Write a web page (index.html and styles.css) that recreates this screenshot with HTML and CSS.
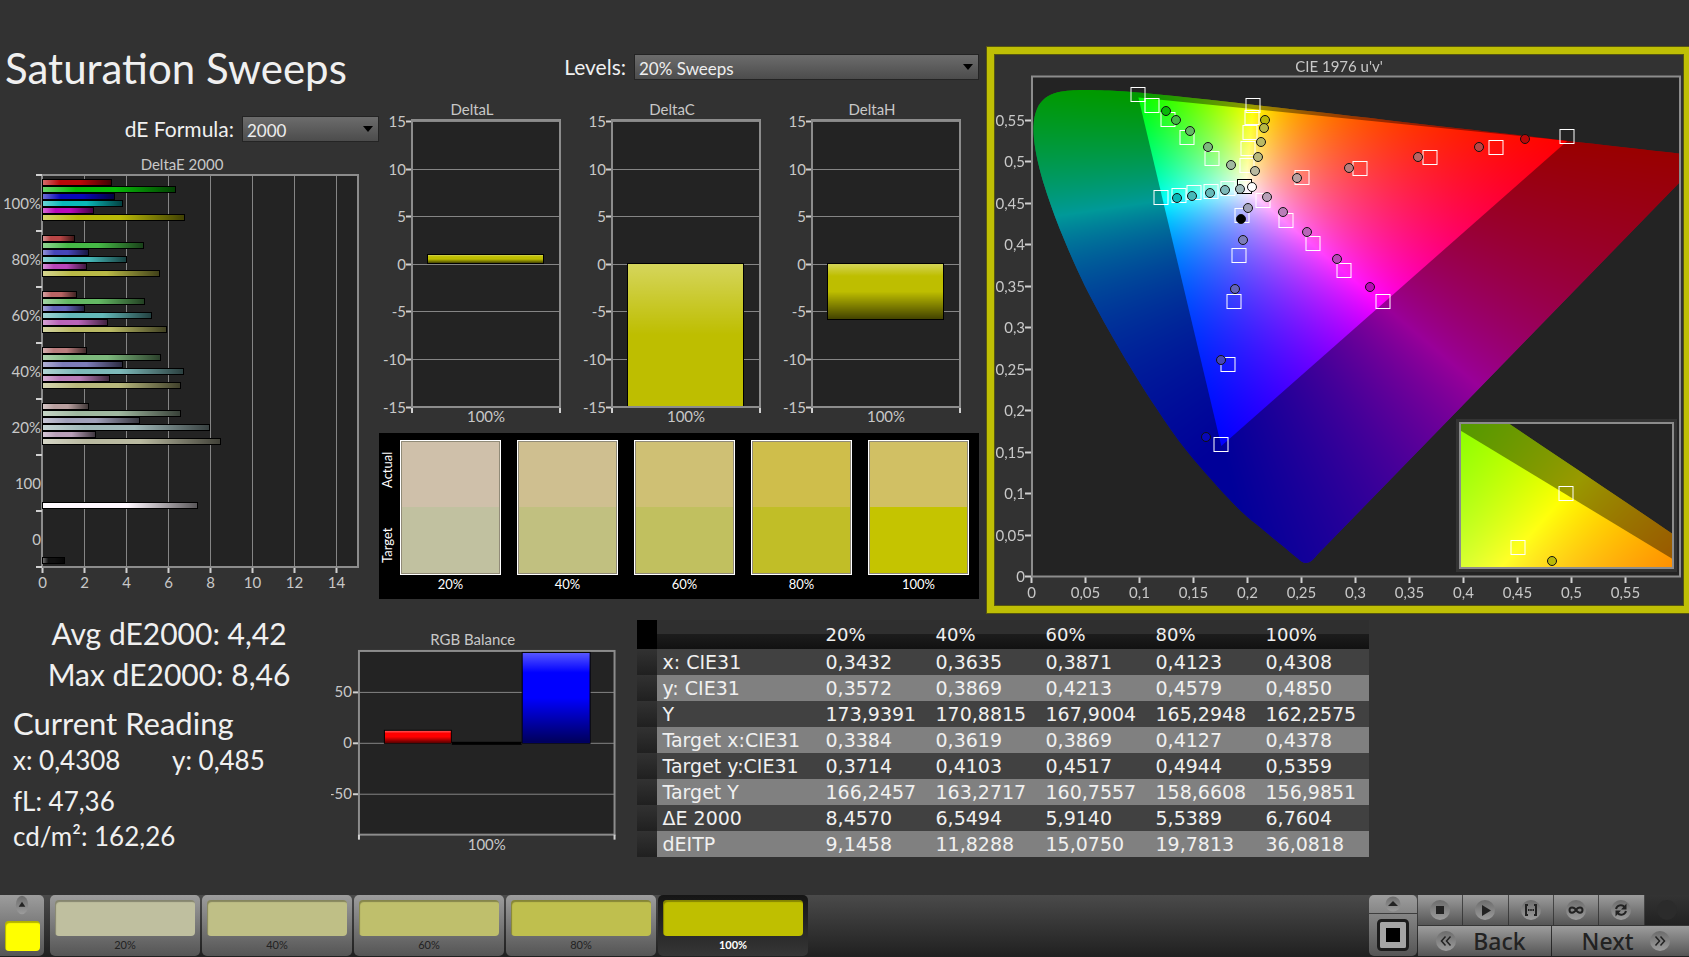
FILE: index.html
```html
<!DOCTYPE html>
<html lang="en">
<head>
<meta charset="UTF-8">
<meta name="viewport" content="width=device-width, initial-scale=1.0">
<title>Saturation Sweeps</title>
<link rel="stylesheet" href="styles.css">
</head>
<body>
    <main>
        <div class="top">
            <section class="left">
                <h1>Saturation Sweeps</h1>
                <div class="field formula">
                    <label for="formula">dE Formula:</label>
                    <div class="select"><select id="formula"><option>2000</option></select></div>
                </div>
                <svg id="deltaE" class="chart" viewBox="0 0 379 440"></svg>
            </section>
            <section class="middle">
                <div class="field levels">
                    <label for="levels">Levels:</label>
                    <div class="select"><select id="levels"><option>20% Sweeps</option></select></div>
                </div>
                <div class="deltas">
                    <svg id="deltaL" class="chart" viewBox="0 0 200 330"></svg>
                    <svg id="deltaC" class="chart" viewBox="0 0 200 330"></svg>
                    <svg id="deltaH" class="chart" viewBox="0 0 200 330"></svg>
                </div>
                <div class="swatches">
                    <div class="swatch-names"><span>Actual</span><span>Target</span></div>
                    <figure><div class="swatch s20"></div><figcaption>20%</figcaption></figure>
                    <figure><div class="swatch s40"></div><figcaption>40%</figcaption></figure>
                    <figure><div class="swatch s60"></div><figcaption>60%</figcaption></figure>
                    <figure><div class="swatch s80"></div><figcaption>80%</figcaption></figure>
                    <figure><div class="swatch s100"></div><figcaption>100%</figcaption></figure>
                </div>
            </section>
            <section class="cie">
                <canvas id="gamut" width="690" height="552"></canvas>
                <svg id="cie" class="chart" viewBox="0 0 690 552"></svg>
            </section>
        </div>
        <div class="bottom">
            <section class="stats">
                <div class="totals">
                    <p>Avg dE2000: 4,42</p>
                    <p>Max dE2000: 8,46</p>
                </div>
                <h2>Current Reading</h2>
                <div class="xy"><span>x: 0,4308</span><span>y: 0,485</span></div>
                <p>fL: 47,36</p>
                <p>cd/m²: 162,26</p>
            </section>
            <svg id="rgb" class="chart" viewBox="0 0 300 250"></svg>
            <table>
                <thead>
                    <tr><td class="handle"></td><th></th><th>20%</th><th>40%</th><th>60%</th><th>80%</th><th>100%</th></tr>
                </thead>
                <tbody>
                    <tr><td class="handle"></td><th>x: CIE31</th><td>0,3432</td><td>0,3635</td><td>0,3871</td><td>0,4123</td><td>0,4308</td></tr>
                    <tr><td class="handle"></td><th>y: CIE31</th><td>0,3572</td><td>0,3869</td><td>0,4213</td><td>0,4579</td><td>0,4850</td></tr>
                    <tr><td class="handle"></td><th>Y</th><td>173,9391</td><td>170,8815</td><td>167,9004</td><td>165,2948</td><td>162,2575</td></tr>
                    <tr><td class="handle"></td><th>Target x:CIE31</th><td>0,3384</td><td>0,3619</td><td>0,3869</td><td>0,4127</td><td>0,4378</td></tr>
                    <tr><td class="handle"></td><th>Target y:CIE31</th><td>0,3714</td><td>0,4103</td><td>0,4517</td><td>0,4944</td><td>0,5359</td></tr>
                    <tr><td class="handle"></td><th>Target Y</th><td>166,2457</td><td>163,2717</td><td>160,7557</td><td>158,6608</td><td>156,9851</td></tr>
                    <tr><td class="handle"></td><th>ΔE 2000</th><td>8,4570</td><td>6,5494</td><td>5,9140</td><td>5,5389</td><td>6,7604</td></tr>
                    <tr><td class="handle"></td><th>dEITP</th><td>9,1458</td><td>11,8288</td><td>15,0750</td><td>19,7813</td><td>36,0818</td></tr>
                </tbody>
            </table>
        </div>
    </main>
    <footer>
        <button class="current" aria-label="Current color">
            <svg width="16" height="24" viewBox="0 0 16 24"><ellipse cx="8" cy="12" rx="7.5" ry="11"/><path d="M8 8l4 6H4z"/></svg>
            <span class="color"></span>
        </button>
        <div class="patches">
            <button><span class="color c20"></span>20%</button>
            <button><span class="color c40"></span>40%</button>
            <button><span class="color c60"></span>60%</button>
            <button><span class="color c80"></span>80%</button>
            <button class="active"><span class="color c100"></span>100%</button>
        </div>
        <div class="window">
            <button class="expand" aria-label="Expand">
                <svg width="16" height="16" viewBox="0 0 16 16"><circle cx="8" cy="8" r="7.5"/><path d="M8 5l5 5H3z"/></svg>
            </button>
            <button class="pattern" aria-label="Pattern window">
                <svg width="32" height="32" viewBox="0 0 32 32"><rect class="ring" x="1.5" y="1.5" width="29" height="29" rx="3"/><path d="M9 9h14v14H9z"/></svg>
            </button>
        </div>
        <div class="controls">
            <div class="row">
                <button aria-label="Stop"><svg width="22" height="22" viewBox="0 0 22 22"><circle cx="11" cy="11" r="10"/><path d="M7 7h8v8H7z"/></svg></button>
                <button aria-label="Play"><svg width="22" height="22" viewBox="0 0 22 22"><circle cx="11" cy="11" r="10"/><path d="M8 6l9 5.500l-9 5.500z"/></svg></button>
                <button aria-label="Read series"><svg width="22" height="22" viewBox="0 0 22 22"><circle cx="11" cy="11" r="10"/><path class="line" d="M8 6H6v10h2M14 6h2v10h-2"/><path d="M8 10h1.500v2H8zM10.250 10h1.500v2h-1.500zM12.500 10H14v2h-1.500z"/></svg></button>
                <button aria-label="Read continuous"><svg width="22" height="22" viewBox="0 0 22 22"><circle cx="11" cy="11" r="10"/><path class="line" d="M11 11c-2-3.500-6.500-3.500-6.500 0s4.500 3.500 6.500 0s6.500-3.500 6.500 0s-4.500 3.500-6.500 0z"/></svg></button>
                <button aria-label="Refresh"><svg width="22" height="22" viewBox="0 0 22 22"><circle cx="11" cy="11" r="10"/><path class="line" d="M6 10c1-4 6-5 8.500-2M16 12c-1 4-6 5-8.500 2"/><path d="M16.500 4.500v6h-5.500zM5.500 17.500v-6h5.500z"/></svg></button>
                <button class="off" aria-label="Unavailable" disabled><svg width="22" height="22" viewBox="0 0 22 22"><circle cx="11" cy="11" r="10"/></svg></button>
            </div>
            <div class="row nav">
                <button class="back"><svg width="22" height="22" viewBox="0 0 22 22"><circle cx="11" cy="11" r="10"/><path class="line thin" d="M10.500 6.500l-4 4.500l4 4.500M15.500 6.500l-4 4.500l4 4.500"/></svg>Back</button>
                <button class="next">Next<svg width="22" height="22" viewBox="0 0 22 22"><circle cx="11" cy="11" r="10"/><path class="line thin" d="M6.500 6.500l4 4.500l-4 4.500M11.500 6.500l4 4.500l-4 4.500"/></svg></button>
            </div>
        </div>
    </footer>
    <svg class="defs" width="0" height="0">
        <linearGradient id="shadeX"><stop offset="0" stop-color="#fff" stop-opacity=".4"/><stop offset=".25" stop-color="#fff" stop-opacity="0"/><stop offset=".55" stop-color="#000" stop-opacity="0"/><stop offset="1" stop-color="#000" stop-opacity=".65"/></linearGradient>
        <linearGradient id="shadeY" x2="0" y2="1"><stop offset="0" stop-color="#fff" stop-opacity=".34"/><stop offset=".22" stop-color="#fff" stop-opacity="0"/><stop offset=".5" stop-color="#000" stop-opacity="0"/><stop offset="1" stop-color="#000" stop-opacity=".65"/></linearGradient>
        <linearGradient id="shadeLong" x2="0" y2="1"><stop offset="0" stop-color="#fff" stop-opacity=".36"/><stop offset=".5" stop-color="#fff" stop-opacity="0"/></linearGradient>
        <linearGradient id="dimple" x2="0" y2="1"><stop offset="0" stop-color="#6c6c6c"/><stop offset="1" stop-color="#9c9c9c"/></linearGradient>
    </svg>
    <script src="charts.js"></script>
</body>
</html>
```
FILE: styles.css
```css
* {
    box-sizing: border-box;
}
body {
    margin: 0;
    min-height: 100vh;
    display: flex;
    flex-direction: column;
    background: #323232;
    color: #f0f0f0;
    font-family: Lato, sans-serif;
}
h1, h2, p, figure {
    margin: 0;
    font-weight: 400;
}
button {
    border: 0;
    padding: 0;
    font-family: inherit;
    cursor: pointer;
}

/* top row */
.top {
    display: grid;
    grid-template-columns: 379fr 608fr 702fr;
    align-items: start;
    padding-top: 46px;
}
h1 {
    padding-left: 5px;
    font-size: 42px;
    line-height: 44px;
}
.field {
    display: flex;
    justify-content: flex-end;
    align-items: center;
    gap: 8px;
    font-size: 21px;
    line-height: 26px;
}
.formula {
    margin: 26px 0 12px;
}
.formula .select {
    width: 137px;
}
.levels {
    padding-top: 8px;
    margin-bottom: 20px;
}
.levels .select {
    width: 345px;
}
.select {
    position: relative;
}
.select::after {
    content: "";
    position: absolute;
    right: 6px;
    top: 10px;
    border: 5px solid transparent;
    border-top: 6px solid #000;
    border-bottom: 0;
    pointer-events: none;
}
select {
    appearance: none;
    display: block;
    width: 100%;
    height: 26px;
    padding: 3px 4px 0;
    border: 1px solid #242424;
    border-radius: 0;
    background: linear-gradient(#6c6c6c, #4c4c4c);
    color: #eee;
    font: 17px/21px Lato, sans-serif;
}
.middle {
    padding-right: 8px;
}
.deltas {
    display: grid;
    grid-template-columns: 1fr 1fr 1fr;
}

/* charts */
.chart {
    display: block;
    width: 100%;
}
.chart text {
    fill: #c8c8c8;
    font-size: 15px;
}
.plot {
    fill: #232323;
}
.frame {
    fill: none;
    stroke: #8c8c8c;
    stroke-width: 2;
}
.grid {
    stroke: #858585;
}
.tick {
    stroke: #d0d0d0;
    stroke-width: 2;
}
.bar {
    stroke: #000;
}
.defs {
    position: absolute;
}

/* actual / target colors */
.swatches {
    display: flex;
    gap: 16px;
    padding: 7px 10px 6px 0;
    margin-top: 3px;
    background: #000;
    color: #fff;
    font-size: 13px;
}
.swatch-names {
    display: flex;
    flex-direction: row-reverse;
    justify-content: space-between;
    width: 21px;
    height: 135px;
    padding: 12px 0;
    margin-right: -16px;
    writing-mode: vertical-rl;
    transform: rotate(180deg);
    line-height: 17px;
}
.swatches figure {
    flex: 1;
    text-align: center;
}
.swatch {
    height: 135px;
    margin-bottom: 1px;
    border: 1px solid #fff;
    box-shadow: inset 0 0 0 1px #918b78;
}
.swatches figcaption {
    line-height: 17px;
}
.s20 { background: linear-gradient(#cfc0aa 50%, #c1c1a0 50%); }
.s40 { background: linear-gradient(#cfbf90 50%, #c1c080 50%); }
.s60 { background: linear-gradient(#cfc074 50%, #c1c05f 50%); }
.s80 { background: linear-gradient(#cfbe4b 50%, #c1be27 50%); }
.s100 { background: linear-gradient(#d1c064 50%, #c5c400 50%); }

/* chromaticity diagram */
.cie {
    display: grid;
    margin-top: 1px;
    border: solid #bfbf05;
    border-width: 7px 5px 7px 7px;
    box-shadow: 0 0 0 1px #57570f, inset 0 0 0 1px #57570f;
}
.cie > * {
    grid-area: 1 / 1;
    width: 100%;
}
.target {
    fill: none;
    stroke: #fff;
}
.white-point {
    stroke: #000;
}
.reading {
    stroke: #111;
}

/* bottom row */
.bottom {
    display: grid;
    grid-template-columns: 330fr 300fr 6fr 732fr 321fr;
    align-items: start;
    padding-bottom: 8px;
}
#rgb {
    margin-top: 14px;
}
.stats {
    padding-left: 13px;
    font-size: 26px;
    line-height: 35px;
    white-space: nowrap;
}
.totals {
    padding-right: 6px;
    font-size: 30px;
    line-height: 41px;
    text-align: center;
    margin-bottom: 8px;
}
h2 {
    font-size: 31px;
    line-height: 40px;
}
.xy {
    display: flex;
    margin-bottom: 6px;
}
.xy span {
    width: 159px;
}
table {
    grid-column: 4;
    width: 100%;
    margin-top: 7px;
    border-collapse: collapse;
    table-layout: fixed;
    font: 19px/26px "DejaVu Sans", sans-serif;
}
td, th {
    padding: 0;
    font-weight: 400;
    text-align: left;
    white-space: nowrap;
}
thead tr {
    height: 29px;
    background: linear-gradient(#2f2f2f 50%, #1c1c1c 50%, #111);
}
thead th {
    width: 110px;
    font-size: 18px;
}
thead th:nth-child(2) {
    width: 169px;
}
thead th:last-child {
    width: 103px;
}
tbody th {
    padding-left: 6px;
}
tbody tr {
    background: #414141;
}
tbody tr:nth-child(even) {
    background: #808080;
}
.handle {
    width: 20px;
    background: linear-gradient(#323232, #202020);
}
thead .handle {
    background: #000;
}

/* bottom bar */
footer {
    display: flex;
    height: 62px;
    margin-top: auto;
    padding-bottom: 1px;
    background: linear-gradient(#4a4a4a, #202020);
}
footer button {
    background: linear-gradient(#9d9d9d, #555);
    color: #222;
}
footer svg {
    display: block;
    fill: #222;
}
footer circle, footer ellipse {
    fill: url(#dimple);
}
.line {
    fill: none;
    stroke: #222;
    stroke-width: 2;
}
.thin {
    stroke-width: 1.5;
}
.color {
    display: block;
    border-radius: 4px;
    box-shadow: inset 1px 2px 1px rgba(0, 0, 0, .3);
}
.current {
    display: flex;
    flex-direction: column;
    align-items: center;
    justify-content: space-between;
    width: 44px;
    padding: 0 4px 5px;
    margin-right: 6px;
    border-radius: 0 5px 5px 0;
}
.current .color {
    width: 35px;
    height: 30px;
    background: #ff0;
}
.current svg {
    height: 20px;
}
.patches {
    display: flex;
    gap: 2px;
}
.patches button {
    width: 150px;
    padding: 5px 5px 3px;
    border-radius: 5px;
    font-size: 11px;
    line-height: 17px;
}
.patches .color {
    height: 36px;
}
.patches .active {
    background: linear-gradient(#151515, #363636);
    color: #fff;
    font-weight: 700;
}
.c20 { background: #bfbf9f; }
.c40 { background: #bfbf86; }
.c60 { background: #bfbf6c; }
.c80 { background: #bfbf4e; }
.c100 { background: #bfbf00; }
.window {
    display: flex;
    flex-direction: column;
    gap: 1px;
    width: 48px;
    margin-left: auto;
    margin-right: 1px;
}
.window button {
    display: flex;
    justify-content: center;
    align-items: center;
}
.window .expand {
    height: 18px;
    border-radius: 5px 5px 0 0;
    background: linear-gradient(#9d9d9d, #868686);
}
.window .pattern {
    flex: 1;
    border-radius: 0 0 5px 5px;
    background: linear-gradient(#858585, #555);
}
.ring {
    fill: #a5a5a5;
    stroke: #1c1c1c;
    stroke-width: 3;
}
.pattern path {
    fill: #000;
}
.controls {
    display: flex;
    flex-direction: column;
    gap: 1px;
    width: 271px;
}
.row {
    display: flex;
    flex: 1;
    gap: 1px;
}
.row button {
    flex: 1;
    display: flex;
    justify-content: center;
    align-items: center;
}
.row .off {
    background: linear-gradient(#333, #222);
}
.off circle {
    fill: #2b2b2b;
}
.nav button {
    gap: 16px;
    font: 500 23px/30px "Noto Sans", sans-serif;
}
.nav .back {
    padding-right: 8px;
}
.nav .next {
    padding-left: 12px;
}
```
FILE: charts.js
```js
const NS = 'http://www.w3.org/2000/svg';

function add(parent, name, attrs, text) {
    const node = document.createElementNS(NS, name);
    for (const key in attrs) node.setAttribute(key, attrs[key]);
    if (text !== undefined) node.textContent = text;
    parent.appendChild(node);
    return node;
}
function line(svg, cls, x1, y1, x2, y2) {
    add(svg, 'line', { class: cls, x1, y1, x2, y2 });
}
function label(svg, text, x, y, anchor) {
    add(svg, 'text', { x, y, 'text-anchor': anchor || 'middle' }, text);
}
function bar(svg, x, y, width, height, color, shade) {
    add(svg, 'rect', { class: 'bar', x, y, width, height, fill: color });
    add(svg, 'rect', { x: x + 0.5, y: y + 0.5, width: width - 1, height: height - 1, fill: 'url(#' + shade + ')' });
}

// sweep colors, from full saturation down to 20%
const low = [8, 70, 100, 125, 160];
const masks = { r: [1, 0, 0], g: [0, 1, 0], b: [0, 0, 1], c: [0, 1, 1], m: [1, 0, 1], y: [1, 1, 0] };
function sweepColor(hue, level) {
    return 'rgb(' + masks[hue].map(on => on ? 185 : low[level]).join(',') + ')';
}

// DeltaE 2000
(function () {
    const svg = document.getElementById('deltaE');
    const unit = 21.05;
    label(svg, 'DeltaE 2000', 182, 16);
    add(svg, 'rect', { class: 'plot', x: 42, y: 21, width: 316, height: 392 });
    for (let i = 0; i < 8; i++) {
        const x = Math.round(41.500 + i * 2 * unit) + 0.5;
        line(svg, 'grid', x, 21, x, 413);
        line(svg, 'tick', x, 413, x, 419);
        label(svg, i * 2, x, 434);
    }
    add(svg, 'rect', { class: 'frame', x: 42, y: 21, width: 316, height: 392 });
    ['100%', '80%', '60%', '40%', '20%', '100', '0'].forEach(function (name, i) {
        label(svg, name, 41, 55 + i * 56, 'end');
    });
    for (let i = 0; i < 8; i++) line(svg, 'tick', 36, 21 + i * 56, 42, 21 + i * 56);
    const values = [
        [3.3, 6.3, 3.4, 3.8, 2.4, 6.76],
        [1.5, 4.8, 2.2, 4.0, 2.1, 5.54],
        [1.6, 4.85, 2.0, 5.2, 3.1, 5.91],
        [2.1, 5.6, 3.8, 6.7, 3.2, 6.55],
        [2.2, 6.55, 4.6, 7.95, 2.5, 8.46]
    ];
    values.forEach(function (group, level) {
        group.forEach(function (value, i) {
            bar(svg, 42.500, 25.500 + level * 56 + i * 7, Math.round(value * unit), 6, sweepColor('rgbcmy'[i], level), 'shadeX');
        });
    });
    bar(svg, 42.500, 348.500, 155, 6, '#fff8ff', 'shadeX');
    bar(svg, 42.500, 403.500, 22, 6, '#101010', 'shadeX');
})();

// DeltaL, DeltaC, DeltaH
function deltaChart(name, y, height, shade) {
    const svg = document.getElementById('delta' + name);
    label(svg, 'Delta' + name, 93, 15);
    add(svg, 'rect', { class: 'plot', x: 33, y: 20, width: 148, height: 287 });
    for (let i = 0; i < 7; i++) {
        const ty = Math.round(21 + i * 47.600) + 0.5;
        line(svg, 'grid', 33, ty, 181, ty);
        line(svg, 'tick', 27, ty, 33, ty);
        label(svg, 15 - i * 5, 27, ty + 5, 'end');
    }
    bar(svg, 48.5, y, 116, height, '#bebe00', shade);
    add(svg, 'rect', { class: 'frame', x: 33, y: 20, width: 148, height: 287 });
    line(svg, 'tick', 33, 308, 33, 313);
    line(svg, 'tick', 181, 308, 181, 313);
    label(svg, '100%', 107, 322);
}
deltaChart('L', 154.5, 9, 'shadeY');
deltaChart('C', 163.5, 143, 'shadeLong');
deltaChart('H', 163.5, 56, 'shadeY');

// RGB Balance
(function () {
    const svg = document.getElementById('rgb');
    label(svg, 'RGB Balance', 142, 18);
    add(svg, 'rect', { class: 'plot', x: 28, y: 24, width: 256, height: 184 });
    [[50, 65.5], [0, 116.5], [-50, 167.5]].forEach(function (t) {
        line(svg, 'grid', 28, t[1], 284, t[1]);
        line(svg, 'tick', 22, t[1], 28, t[1]);
        label(svg, t[0], 21, t[1] + 5, 'end');
    });
    add(svg, 'rect', { class: 'frame', x: 28, y: 24, width: 256, height: 184 });
    bar(svg, 53.5, 103.5, 67, 13, '#f00', 'shadeY');
    add(svg, 'rect', { x: 121, y: 115, width: 70, height: 3 });
    bar(svg, 191.5, 25.5, 68, 91, '#00f', 'shadeY');
    line(svg, 'tick', 28, 208, 28, 213);
    line(svg, 'tick', 284, 208, 284, 213);
    label(svg, '100%', 156, 223);
})();

// CIE 1976 diagram: plot area and scale
const plot = { x: 38, y: 23, w: 648, h: 500, ux: 1079, vy: 830 };
const inset = { x: 466, y: 369, w: 213, h: 145, cx: 572, cy: 440.5, sx: 1912, sy: 1300 };
const locus = [
    [.1741, .0050], [.1714, .0051], [.1689, .0069], [.1644, .0109], [.1566, .0177], [.1440, .0297], [.1241, .0578],
    [.1096, .0868], [.0913, .1327], [.0687, .2007], [.0454, .2950], [.0235, .4127], [.0082, .5384], [.0039, .6548],
    [.0139, .7502], [.0389, .8120], [.0743, .8338], [.1142, .8262], [.1547, .8059], [.2296, .7543], [.3016, .6923],
    [.3731, .6245], [.4441, .5547], [.5125, .4866], [.5752, .4242], [.6270, .3725], [.6658, .3340], [.6915, .3083],
    [.7190, .2809], [.7347, .2653]
];
const primaries = [[.68, .32], [.265, .69], [.15, .06]];

function uvPoint(p) {
    const d = -2 * p[0] + 12 * p[1] + 3;
    return [plot.x + 4 * p[0] / d * plot.ux, plot.y + plot.h - 9 * p[1] / d * plot.vy];
}
function xyPoint(p) {
    return [inset.cx + (p[0] - .4378) * inset.sx, inset.cy - (p[1] - .5359) * inset.sy];
}
// brightest color with this chromaticity
function chroma(x, y) {
    const X = x / y, Z = (1 - x - y) / y;
    const rgb = [
        2.4935 * X - 0.9314 - 0.4027 * Z,
        -0.8295 * X + 1.7627 + 0.0236 * Z,
        0.0358 * X - 0.0762 + 0.9569 * Z
    ].map(v => Math.max(v, 0));
    const max = Math.max(rgb[0], rgb[1], rgb[2]);
    return rgb.map(v => 255 * v / max);
}
function field(w, h, toXy) {
    const canvas = document.createElement('canvas');
    canvas.width = w;
    canvas.height = h;
    const ctx = canvas.getContext('2d');
    const img = ctx.createImageData(w, h);
    for (let j = 0; j < h; j++) {
        for (let i = 0; i < w; i++) {
            const p = toXy(i + 0.5, j + 0.5);
            const c = chroma(p[0], Math.max(p[1], 0.0001));
            img.data.set([c[0], c[1], c[2], 255], (j * w + i) * 4);
        }
    }
    ctx.putImageData(img, 0, 0);
    return canvas;
}
function polygon(points) {
    const path = new Path2D();
    points.forEach(p => path.lineTo(p[0], p[1]));
    path.closePath();
    return path;
}
// smooth curve through the locus points, with a rounded violet corner
function locusShape(points) {
    const path = new Path2D();
    const last = points.length - 1;
    path.moveTo(points[2][0], points[2][1]);
    for (let i = 2; i < last; i++) {
        const a = points[i - 1], b = points[i], c = points[i + 1], d = points[Math.min(i + 2, last)];
        path.bezierCurveTo(
            b[0] + (c[0] - a[0]) / 6, b[1] + (c[1] - a[1]) / 6,
            c[0] - (d[0] - b[0]) / 6, c[1] - (d[1] - b[1]) / 6,
            c[0], c[1]
        );
    }
    const tip = points[0], red = points[last];
    path.lineTo(tip[0] + (red[0] - tip[0]) * 0.02, tip[1] + (red[1] - tip[1]) * 0.02);
    path.bezierCurveTo(tip[0], tip[1] + 2, points[1][0], points[1][1] + 2, points[2][0], points[2][1]);
    return path;
}
function paint(ctx, box, colors, toPoint) {
    ctx.save();
    ctx.beginPath();
    ctx.rect(box.x, box.y, box.w, box.h);
    ctx.clip();
    ctx.fillStyle = '#232323';
    ctx.fillRect(box.x, box.y, box.w, box.h);
    ctx.clip(locusShape(locus.map(toPoint)));
    ctx.drawImage(colors, box.x, box.y);
    ctx.fillStyle = 'rgba(0, 0, 0, .4)';
    ctx.fillRect(box.x, box.y, box.w, box.h);
    ctx.clip(polygon(primaries.map(toPoint)));
    ctx.drawImage(colors, box.x, box.y);
    ctx.restore();
}
(function () {
    const ctx = document.getElementById('gamut').getContext('2d');
    paint(ctx, plot, field(plot.w, plot.h, function (i, j) {
        const u = i / plot.ux, v = (plot.h - j) / plot.vy;
        const d = 6 * u - 16 * v + 12;
        return [9 * u / d, 4 * v / d];
    }), uvPoint);
    ctx.fillStyle = '#333';
    ctx.fillRect(inset.x - 4, inset.y - 4, inset.w + 8, inset.h + 8);
    paint(ctx, inset, field(inset.w, inset.h, function (i, j) {
        return [.4378 + (inset.x + i - inset.cx) / inset.sx, .5359 - (inset.y + j - inset.cy) / inset.sy];
    }), xyPoint);
})();

(function () {
    const svg = document.getElementById('cie');
    label(svg, "CIE 1976 u'v'", 345, 18);
    for (let i = 0; i < 12; i++) {
        const name = String(i * 5 / 100).replace('.', ',');
        const x = Math.round(37 + i * 54) + 0.5;
        const y = Math.round(522 - i * 41.500) + 0.5;
        line(svg, 'tick', x, 523, x, 529);
        label(svg, name, x, 544);
        line(svg, 'tick', 31, y, 37, y);
        label(svg, name, 31, y + 5, 'end');
    }
    add(svg, 'rect', { class: 'frame', x: 38, y: 22.500, width: 648, height: 500 });
    add(svg, 'rect', { class: 'frame', x: inset.x, y: inset.y, width: inset.w, height: inset.h });

    const targets = [
        [144, 41], [158, 52], [174, 66], [193, 84], [218, 105],
        [259, 52], [258, 64], [256, 79], [254, 95], [253, 112],
        [167, 144], [185, 142], [200, 139], [217, 138], [234, 135],
        [308, 124], [366, 115], [436, 104], [502, 94], [573, 83],
        [269, 147], [292, 167], [319, 190], [350, 217], [389, 248],
        [248, 162], [245, 202], [240, 248], [234, 311], [227, 391],
        [572, 440], [524, 494]
    ];
    targets.forEach(function (t) {
        add(svg, 'rect', { class: 'target', x: t[0] - 7, y: t[1] - 7.5, width: 14, height: 14 });
    });
    add(svg, 'rect', { class: 'target', x: 244.5, y: 126.5, width: 12, height: 12 });
    add(svg, 'rect', { class: 'target white-point', x: 243.5, y: 125.5, width: 14, height: 14 });

    const readings = {
        g: [[172, 57], [182, 66], [196, 77], [214, 93], [237, 111]],
        y: [[271, 66], [270, 74], [267, 88], [264, 103], [261, 117]],
        c: [[183, 144], [198, 142], [216, 139], [231, 136], [246, 135]],
        r: [[531, 85], [485, 93], [424, 103], [355, 114], [303, 124]],
        m: [[376, 233], [343, 205], [313, 178], [289, 158], [273, 143]],
        b: [[212, 383], [227, 306], [241, 235], [249, 186], [254, 154]]
    };
    function reading(x, y, fill) {
        add(svg, 'circle', { class: 'reading', cx: x, cy: y, r: 4.5, fill: fill });
    }
    for (const hue in readings) {
        readings[hue].forEach(function (p, level) {
            reading(p[0], p[1], sweepColor(hue, level));
        });
    }
    reading(258, 133, '#fff');
    reading(247, 165, '#000');
    reading(558, 507, sweepColor('y', 0));
})();
```
